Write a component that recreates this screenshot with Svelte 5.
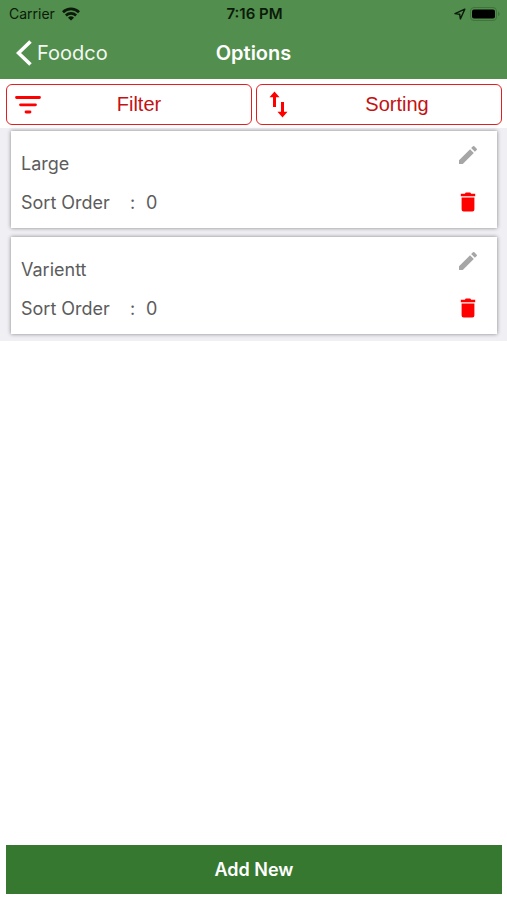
<script>
  let options = $state([
    { id: 1, name: 'Large', sortOrder: 0 },
    { id: 2, name: 'Varientt', sortOrder: 0 }
  ]);

  function remove(id) {
    options = options.filter((option) => option.id !== id);
  }
</script>

<div class="screen">
  <header>
    <div class="status">
      <div class="carrier">
        <span>Carrier</span>
        <svg width="18" height="14" viewBox="0 0 18 14" aria-hidden="true">
          <g fill="none" stroke="#0b1a0a" stroke-width="2.7">
            <path d="M1 5.2a11.4 11.4 0 0 1 16 0" />
            <path d="M3.9 8.5a7.3 7.3 0 0 1 10.2 0" />
          </g>
          <path d="M9 13.6 6 10.8a4.3 4.3 0 0 1 6 0z" fill="#0b1a0a" />
        </svg>
      </div>
      <time>7:16 PM</time>
      <div class="indicators">
        <svg width="12" height="12" viewBox="0 0 12 12" aria-hidden="true">
          <path d="M10.8 1.2 1 5.6l4.7.7.7 4.6z" fill="none" stroke="#0b1a0a" stroke-width="1.4" stroke-linejoin="round" />
        </svg>
        <svg width="30" height="14" viewBox="0 0 30 14" aria-hidden="true">
          <rect x="0.5" y="0.5" width="26" height="13" rx="3.5" fill="none" stroke="#3f743b" />
          <rect x="2" y="2.5" width="23" height="9" rx="2" fill="#000" />
          <path d="M28 4.8v4.4c1-.4 1.6-1.2 1.6-2.2S29 5.2 28 4.8z" fill="#3f743b" />
        </svg>
      </div>
    </div>

    <nav>
      <a class="back" href="#foodco">
        <svg width="16" height="26" viewBox="0 0 16 26" aria-hidden="true">
          <path d="M14.5 1.5 2.5 13l12 11.5" fill="none" stroke="#fff" stroke-width="3.6" />
        </svg>
        Foodco
      </a>
      <h1>Options</h1>
    </nav>
  </header>

  <div class="toolbar">
    <button class="filter" type="button">
      <svg width="26" height="20" viewBox="0 0 26 20" aria-hidden="true">
        <path d="M1.5 2.5h23M5.5 9.8h15M11 17h4" stroke="#f00" stroke-width="2.8" stroke-linecap="round" />
      </svg>
      <span>Filter</span>
    </button>
    <button class="sorting" type="button">
      <svg width="20" height="28" viewBox="0 0 20 28" aria-hidden="true">
        <path d="M5.5 16V4M13.500 11v12" fill="none" stroke="#f00" stroke-width="3" />
        <path d="M5.500 .5 10.500 6.300h-10zM13.500 26.500l-5-5.800h10z" fill="#f00" />
      </svg>
      <span>Sorting</span>
    </button>
  </div>

  <ul class="list">
    {#each options as option (option.id)}
      <li class="card">
        <div class="row">
          <span>{option.name}</span>
          <button class="icon edit" type="button" aria-label="Edit {option.name}">
            <svg width="24" height="24" viewBox="0 0 24 24" aria-hidden="true">
              <path
                d="M3 17.250V21h3.750L17.810 9.940l-3.750-3.750L3 17.250zM20.710 7.040a1 1 0 0 0 0-1.410l-2.340-2.340a1 1 0 0 0-1.410 0l-1.830 1.830 3.750 3.750 1.830-1.830z"
                fill="#a6a6a6"
              />
            </svg>
          </button>
        </div>
        <div class="row">
          <span class="label">Sort Order</span>
          <span class="colon">:</span>
          <span>{option.sortOrder}</span>
          <button class="icon" type="button" aria-label="Delete {option.name}" onclick={() => remove(option.id)}>
            <svg width="24" height="24" viewBox="0 0 24 24" aria-hidden="true">
              <path
                d="M5.600 7.400h12.800v12a2 2 0 0 1-2 2H7.600a2 2 0 0 1-2-2zM4.800 3.800h4l1-1.200h4.400l1 1.200h4v2.400H4.800z"
                fill="#f00"
              />
            </svg>
          </button>
        </div>
      </li>
    {/each}
  </ul>

  <footer>
    <button class="add" type="button">Add New</button>
  </footer>
</div>

<style>
  :global(body) {
    background: #fff;
  }

  .screen {
    display: flex;
    flex-direction: column;
    min-height: 100vh;
    font-family: Inter, 'Liberation Sans', sans-serif;
    color: #5c5c5c;
  }

  button {
    padding: 0;
    border: 0;
    background: none;
    font: inherit;
    cursor: pointer;
  }

  svg {
    display: block;
    flex: none;
  }

  header {
    background: #528e4d;
  }

  .status,
  nav {
    display: grid;
    grid-template-columns: 1fr auto 1fr;
    align-items: center;
  }

  .status {
    height: 27px;
    padding: 0 7px 0 9px;
    color: #0b1a0a;
    font-size: 14px;
  }

  .carrier,
  .indicators {
    display: flex;
    align-items: center;
    gap: 7px;
  }

  .indicators {
    justify-content: flex-end;
    gap: 4px;
  }

  .status time {
    font-size: 15px;
    font-weight: 600;
  }

  nav {
    height: 52px;
    padding: 0 16px;
    color: #fff;
  }

  .back {
    display: flex;
    align-items: center;
    gap: 5px;
    color: #f2f8f1;
    font-size: 20px;
    text-decoration: none;
  }

  h1 {
    margin: 0;
    font-size: 20px;
    font-weight: 600;
  }

  .toolbar {
    display: grid;
    grid-template-columns: 1fr 1fr;
    gap: 4px;
    padding: 5px 5px 3px 6px;
  }

  .toolbar button {
    display: flex;
    align-items: center;
    height: 41px;
    border: 1px solid #e02020;
    border-radius: 6px;
    color: #c41212;
    font-family: 'Liberation Sans', sans-serif;
    font-size: 20px;
  }

  .toolbar span {
    flex: 1;
    text-align: center;
  }

  .toolbar .filter {
    padding: 0 14px 0 8px;
  }

  .toolbar .sorting {
    padding-left: 12px;
  }

  .toolbar .sorting span {
    padding-left: 4px;
  }

  .list {
    display: grid;
    gap: 9px;
    margin: 0;
    padding: 3px 10px 7px 11px;
    background: #efeff4;
    list-style: none;
  }

  .card {
    padding: 9px 17px 10px 10px;
    background: #fff;
    box-shadow: 0 0 4px rgb(0 0 0 / 0.45);
    font-size: 18px;
  }

  .row {
    display: flex;
    align-items: center;
    height: 46px;
  }

  .row + .row {
    height: 32px;
  }

  .label {
    width: 109px;
  }

  .colon {
    width: 16px;
  }

  .icon {
    margin-left: auto;
  }

  .edit {
    align-self: flex-start;
    margin-top: 3px;
  }

  footer {
    margin-top: auto;
    padding: 6px 5px 6px 6px;
  }

  .add {
    width: 100%;
    height: 49px;
    background: #36782f;
    color: #fff;
    font-size: 18px;
    font-weight: 600;
  }
</style>
